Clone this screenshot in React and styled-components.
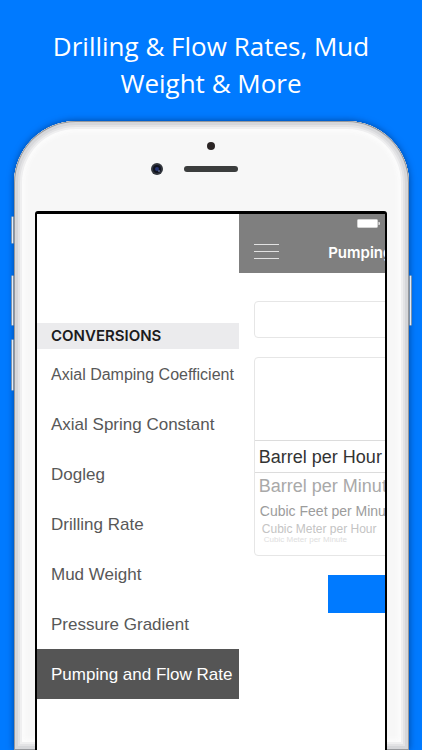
import React, { useState } from 'react';
import styled, { createGlobalStyle } from 'styled-components';

const GlobalStyle = createGlobalStyle`
  * {
    box-sizing: border-box;
  }
  body {
    margin: 0;
    background: #007aff;
  }
  button, input {
    font: inherit;
    color: inherit;
  }
`;

const Page = styled.main`
  display: flex;
  flex-direction: column;
  height: 100vh;
  overflow: hidden;
  background: #007aff;
  font-family: 'Liberation Sans', Arial, sans-serif;
`;

const Headline = styled.h1`
  margin: 0;
  padding: 28px 40px 19px;
  color: #fff;
  font: 400 26px/37px 'Open Sans', sans-serif;
  text-align: center;
`;

// phone
const Phone = styled.section`
  position: relative;
  display: flex;
  flex: 1;
  flex-direction: column;
  margin: 0 13px 0 14px;
  padding: 0 22px 0 21px;
  border-radius: 62px 62px 0 0;
  background: #f7f7f7;
  box-shadow:
    inset 0 0 0 1px #96989c,
    inset 0 0 0 4px #d6d7da,
    inset 0 0 0 6px #e3e3e5,
    inset 0 0 0 8px #efeff0,
    inset 0 0 4px 11px #fcfcfc,
    0 0 7px rgba(0, 30, 80, .6);
`;

const SideKey = styled.span`
  position: absolute;
  top: ${props => props.$top}px;
  ${props => props.$side}: -3px;
  width: 3px;
  height: ${props => props.$height}px;
  border: 1px solid #7d93ad;
  border-radius: 2px;
  background: #e4edf7;
`;

const Bezel = styled.div`
  height: 90px;
  padding-top: 20px;
`;

const Hardware = styled.svg`
  display: block;
  width: 130px;
  height: 36px;
  margin: 0 auto;
`;

const Screen = styled.div`
  position: relative;
  display: flex;
  flex: 1;
  overflow: hidden;
  border: solid #000;
  border-width: 3px 2px 0 2px;
  border-radius: 3px 3px 0 0;
  background: #fff;
`;

const Battery = styled.svg`
  position: absolute;
  top: 5px;
  right: 4px;
  width: 24px;
  height: 10px;
`;

// drawer
const Drawer = styled.nav`
  flex: 0 0 58%;
  padding-top: 109px;
`;

const DrawerTitle = styled.h2`
  margin: 0;
  padding-left: 14px;
  background: #ebebed;
  color: #1c1c1e;
  font: 600 15px/26px Inter, sans-serif;
`;

const DrawerList = styled.ul`
  margin: 0;
  padding: 0;
  list-style: none;
`;

const DrawerItem = styled.button`
  display: block;
  width: 100%;
  height: 50px;
  padding: 2px 0 0 14px;
  border: 0;
  background: ${props => (props.$active ? '#555' : 'transparent')};
  color: ${props => (props.$active ? '#fff' : '#585858')};
  font-size: ${props => (props.$long ? 16 : 17)}px;
  text-align: left;
  white-space: nowrap;
`;

// page behind the drawer
const Content = styled.div`
  flex: 0 0 100%;
`;

const NavBar = styled.header`
  display: flex;
  align-items: flex-end;
  height: 59px;
  padding: 0 15px;
  background: #7f7f7f;
  color: #fff;
`;

const MenuButton = styled.button`
  width: 25px;
  height: 44px;
  padding: 0;
  border: 0;
  background: none;
  svg {
    display: block;
  }
`;

const NavTitle = styled.h2`
  flex: 1;
  margin: 0 25px 0 0;
  font: 600 15px/40px Inter, sans-serif;
  text-align: center;
`;

const Form = styled.form`
  display: flex;
  flex-direction: column;
  gap: 19px;
  padding: 28px 15px;
`;

const ValueInput = styled.input`
  width: 100%;
  height: 37px;
  padding: 0 10px;
  border: 1px solid #e6e6e6;
  border-radius: 4px;
  background: #fff;
`;

const Wheel = styled.div`
  height: 199px;
  padding-top: 82px;
  border: 1px solid #e6e6e6;
  border-radius: 4px;
  overflow: hidden;
`;

const WheelRow = styled.button`
  display: block;
  width: 100%;
  height: ${props => props.$height}px;
  padding: 0 0 0 ${props => props.$indent}px;
  overflow: hidden;
  border: 0;
  background: none;
  color: ${props => props.$color};
  font-size: ${props => props.$size}px;
  line-height: ${props => props.$height}px;
  text-align: left;
  white-space: nowrap;
  &[aria-selected='true'] {
    border-top: 1px solid #dcdcdc;
    border-bottom: 1px solid #dcdcdc;
  }
`;

const ConvertButton = styled.button`
  align-self: center;
  width: 169px;
  height: 38px;
  border: 0;
  background: #007aff;
  color: #fff;
`;

const conversions = [
  'Axial Damping Coefficient',
  'Axial Spring Constant',
  'Dogleg',
  'Drilling Rate',
  'Mud Weight',
  'Pressure Gradient',
  'Pumping and Flow Rate',
];

// rows get smaller and paler as the wheel turns away
const units = [
  { name: 'Barrel per Hour', height: 33, indent: 4, size: 18, color: '#333' },
  { name: 'Barrel per Minute', height: 26, indent: 4, size: 18, color: '#a9a9a9' },
  { name: 'Cubic Feet per Minute', height: 24, indent: 5, size: 14, color: '#9c9c9c' },
  { name: 'Cubic Meter per Hour', height: 12, indent: 7, size: 12, color: '#c4c4c4' },
  { name: 'Cubic Meter per Minute', height: 9, indent: 9, size: 8, color: '#dedede' },
];

export default function App() {
  const [current, setCurrent] = useState('Pumping and Flow Rate');

  return (
    <>
      <GlobalStyle />
      <Page>
        <Headline>Drilling &amp; Flow Rates, Mud Weight &amp; More</Headline>
        <Phone>
          <SideKey $side="left" $top={95} $height={28} />
          <SideKey $side="left" $top={154} $height={51} />
          <SideKey $side="left" $top={218} $height={52} />
          <SideKey $side="right" $top={154} $height={51} />
          <Bezel>
            <Hardware viewBox="0 0 130 36">
              <circle cx="65" cy="5" r="4" fill="#2b2525" />
              <circle cx="11" cy="28" r="6" fill="#32363d" />
              <circle cx="11" cy="28" r="4" fill="#10131f" />
              <circle cx="11" cy="28" r="2" fill="#263573" />
              <circle cx="13" cy="30" r="1" fill="#5d6b8d" />
              <rect x="38" y="25" width="54" height="6" rx="3" fill="#3b3d3d" />
            </Hardware>
          </Bezel>
          <Screen>
            <Drawer>
              <DrawerTitle>CONVERSIONS</DrawerTitle>
              <DrawerList>
                {conversions.map(name => (
                  <li key={name}>
                    <DrawerItem
                      type="button"
                      $active={name === current}
                      $long={name.length > 22}
                      onClick={() => setCurrent(name)}
                    >
                      {name}
                    </DrawerItem>
                  </li>
                ))}
              </DrawerList>
            </Drawer>
            <Content>
              <NavBar>
                <MenuButton type="button" aria-label="Menu">
                  <svg width="25" height="17" viewBox="0 0 25 17" stroke="#e2e2e2">
                    <path d="M0 1.5h25M0 8.5h25M0 15.5h25" />
                  </svg>
                </MenuButton>
                <NavTitle>{current}</NavTitle>
              </NavBar>
              <Form onSubmit={e => e.preventDefault()}>
                <ValueInput type="text" aria-label="Value" />
                <Wheel role="listbox" aria-label="Unit">
                  {units.map((unit, i) => (
                    <WheelRow
                      key={unit.name}
                      type="button"
                      role="option"
                      aria-selected={i === 0}
                      $height={unit.height}
                      $indent={unit.indent}
                      $size={unit.size}
                      $color={unit.color}
                    >
                      {unit.name}
                    </WheelRow>
                  ))}
                </Wheel>
                <ConvertButton type="submit" aria-label="Convert" />
              </Form>
            </Content>
            <Battery viewBox="0 0 24 10">
              <rect x="0.5" y="0.5" width="20" height="8" rx="1" fill="#fff" stroke="#d4d4d4" />
              <path d="M21.5 3h1q1 1.5 0 3h-1z" fill="#eee" />
            </Battery>
          </Screen>
        </Phone>
      </Page>
    </>
  );
}
